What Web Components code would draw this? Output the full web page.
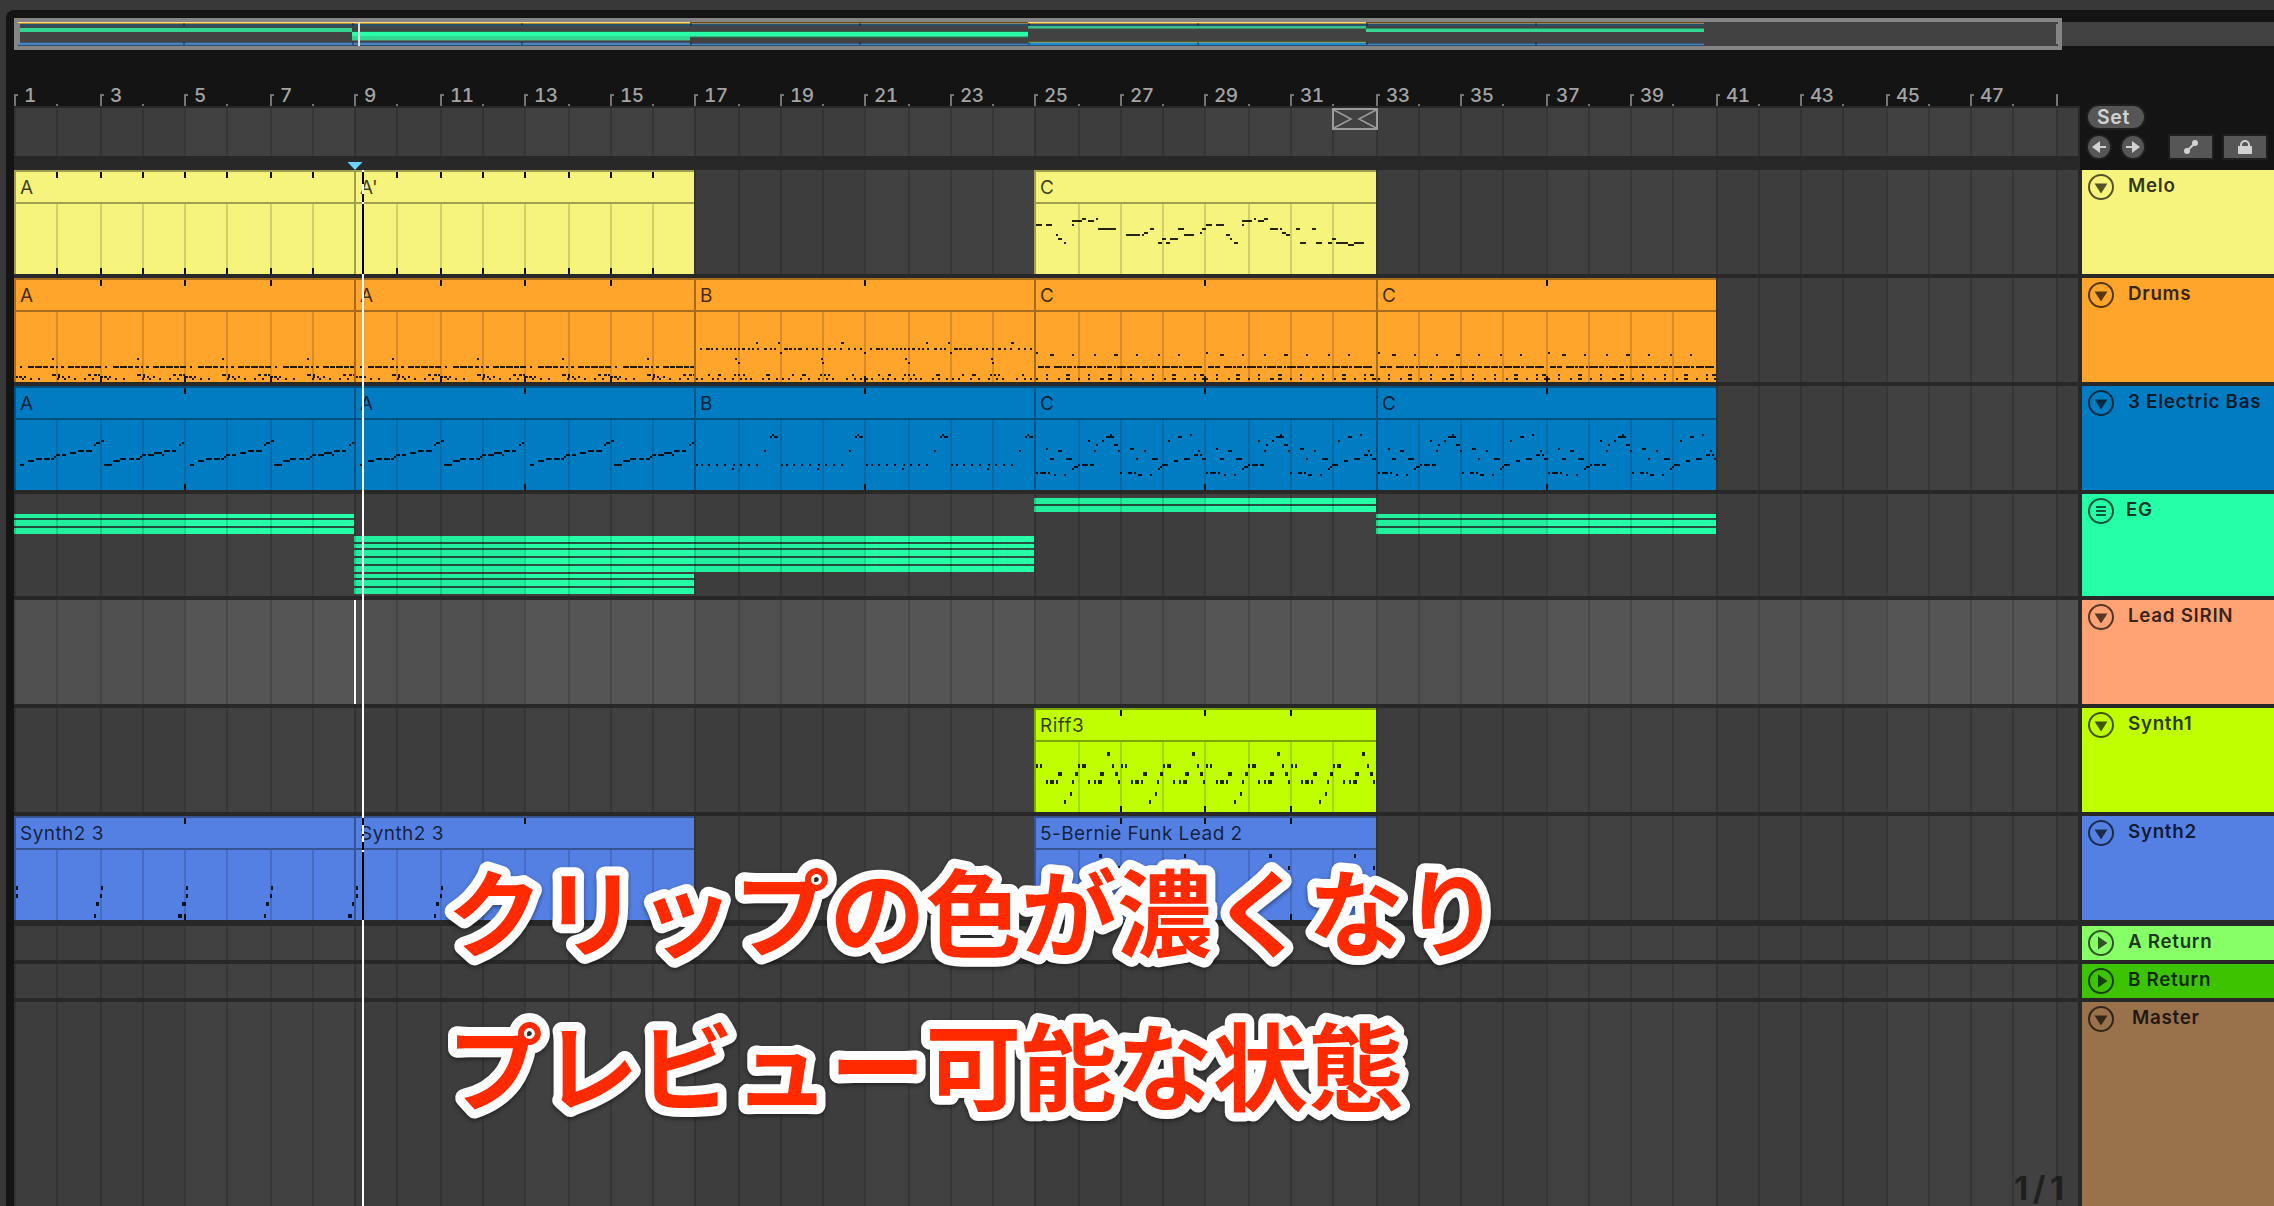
<!DOCTYPE html>
<html lang="ja">
<head>
<meta charset="utf-8">
<title>Arrangement</title>
<style>
    html, body { margin: 0; height: 100%; }
    body {
        background: #383838;
        font-family: Inter, "Noto Sans", sans-serif;
        overflow: hidden;
    }
</style>
</head>
<body>
<arrange-view></arrange-view>

<script>
// x of a bar line, measured from the left edge of the lanes, snapped to 2px
function barX(bar) {
    return 2 * Math.floor((15.22 + 42.525 * (bar - 1)) / 2) - 14;
}

const LANE_WIDTH = 2064;
const BARS = 49;

// columns for a lane: one per bar and the rest at the end
const laneColumns = Array.from({ length: BARS - 1 }, (_, i) => (barX(i + 2) - barX(i + 1)) + 'px').join(' ') + ' 1fr';

// Note patterns: "row:start-end,start-end" in 2px units, times/step is how often and how far it repeats
const NOTES = {
    melo: { h: 1, times: 1, step: 0, rows: '7:24-26,31-32,110-111,115-117;8:19-24,27-30,104-109,112-115;10:1-4,6-9,19-20,86-89,91-95,104-105;12:32-41,58-60,72-75,84-86,118-122,123-124,131-133,139-141;14:55-57,83-84,124-126;15:11-12,46-53,54-55,75-80,96-98,126-128;17:12-14,64-66,68-72,98-99,149-151;19:15-16,62-64,66-68,100-102,133-136,141-144,147-149,151-157,160-165;20:157-160' },
    drumsA: { h: 1, times: 4, step: 42.5, rows: '23:19-20;27:3-4,7-10,10.5-14,14.5-17,18-20,21-22,23.5-25,27-30,30.5-33,33.5-37,37.5-40,40.5-43.5;31:19-21,22-23,37-38.5,40-41.5,42-43;32:1-2,2.5-4,5-6,22-23,24-25,27-28;33:4-5,8-9,12-13,21.5-22.5,25-26,30-31,35-36,39-40' },
    drumsB: { h: 1, times: 2, step: 85, rows: '15:31-32,42-43,73.5-75;18:3-4,6-8,8.5-9.5,11-12,14-15,16-17,18-19,20-21,22-23,24-25.5,27-28,29-30,31.5-32.5,35-36.5,38-39,40-41,45-47,47.5-49,50-51,52-54,56-57,59-60,61-62,64-65,67-68.5,70-71,73-74,77-78,80-81,83-84;20:43-44,85-86;23:20.5-21.5,63.5-64.5;25:22-23,64-65;31:7-8,12-13.5,20-21,22-23,24.5-25.5,36-38,49-50,54-56,63-64,65-66,67-68,79-80;33:1-2,3.5-4.5,9-10,11.5-12.5,15-16,19-20,23-24,25.5-26.5,28-29,34-35,37-38,41-42,44-45,47-48,53-54,57-58,62-63,66-67,69-70,76-77,80-81,83-84' },
    drumsC: { h: 1, times: 2, step: 85, rows: '20:1-2;21:8-10,19-20,30-31,40-42,51-52,62-63,72-73;27:2-5,5.5-8,10-14,14.5-16,16.5-19,20-21,21.5-26,26.5-29,30-31,31.5-36,36.5-39,40-41,41.5-46,46.5-50,50.5-53,54-57,57.5-61,61.5-63,64-68,68.5-72,72.5-74,75-79,79.5-84;31:6-7,16-18,27-28,37-39,48-49,59-60,69-71,80-81,83-85;33:1-2,6-7,12-13,16-18,22-23,27-28,33-35,37-39,43-44,48-49,54-55,59-60,65-66,69-71,75-76,80-81,84-86' },
    bassA: { h: 1, times: 2, step: 85, rows: '10:43.5-45;11:41-43,84-85;12:40-41,82.5-83.5;15:32-35,36-39,75-78,79-81;16:28-31,70-74;17:21-23,24-26,64-66,67-70,74-75;18:20-21,63-64;19:11-14,15-18,18.5-20,53-56,57.5-60,61-63;20:7-10,49.5-53;22:3-5,45-49' },
    bassB: { h: 1, times: 4, step: 42.5, rows: '7:39-40;8:38-39,40-42;15:35-36;22:1-2,3.5-4.5,7-8,11-12,15-16,19.5-20.5,23-24,27-28,31-32;24:19-20' },
    bassC: { h: 1, times: 2, step: 85, rows: '7:38-39,78-79;8:36-40,72-74;10:27-28,34-35,67-68;12:31-32,40-42;14:6-7,48-50;15:12-14,30-31,42-43,55-56,82-83;17:80-82,83-84;19:8-10,16-19,51-52,59-62,75-78,84-86;20:70-72;22:22-23,24-27,28-30,64-67;23:20-22,63-64;24:19-20,62-63;26:1-2,3-6,7-8,43-44,47-49,50-51;27:10-11,15-16,52-54,58-59' },
    riff: { h: 2, times: 4, step: 42.5, rows: '5:36.5-38;11:1-2,3-4,22-23,24-26,39-40;15:12-14,20.5-22,33-35,40.5-42;19:6-7,8-10,11-12,19-20,27-28,30-31,32-34,42-43;25:18-19;29:15-16' },
    synth: { h: 2, times: 2, step: 85, rows: '18:1-2,43.5-44.5;22:1-2,43-44;26:41-42.5,84-86;32:40-41,82-84' },
    lead: { h: 2, times: 2, step: 85, rows: '2:32.5-34,75-76;8:42-43,84.5-85.5' }
};

const TRACKS = [
    { name: 'Melo', color: '#f6f47c', height: 104, clips: [
        { label: 'A', from: 1, to: 9, ticks: 1 },
        { label: "A'", from: 9, to: 17, ticks: 1 },
        { label: 'C', from: 25, to: 33, notes: 'melo' }
    ] },
    { name: 'Drums', color: '#ffa52c', height: 104, clips: [
        { label: 'A', from: 1, to: 9, ticks: 2, notes: 'drumsA' },
        { label: 'A', from: 9, to: 17, ticks: 2, notes: 'drumsA' },
        { label: 'B', from: 17, to: 25, ticks: 4, notes: 'drumsB' },
        { label: 'C', from: 25, to: 33, ticks: 4, notes: 'drumsC' },
        { label: 'C', from: 33, to: 41, ticks: 4, notes: 'drumsC' }
    ] },
    { name: '3 Electric Bas', color: '#007dc2', height: 104, clips: [
        { label: 'A', from: 1, to: 9, ticks: 4, notes: 'bassA' },
        { label: 'A', from: 9, to: 17, ticks: 4, notes: 'bassA' },
        { label: 'B', from: 17, to: 25, ticks: 4, notes: 'bassB' },
        { label: 'C', from: 25, to: 33, ticks: 4, notes: 'bassC' },
        { label: 'C', from: 33, to: 41, ticks: 4, notes: 'bassC' }
    ] },
    { name: 'EG', color: '#25ffa8', height: 102, icon: 'group', indent: 12, bands: [
        { from: 1, to: 9, rows: [[20, 4], [26, 6], [34, 6]] },
        { from: 9, to: 25, rows: [[42, 6], [50, 4], [56, 6], [64, 6], [72, 6]] },
        { from: 9, to: 17, rows: [[80, 4], [86, 6], [94, 6]] },
        { from: 25, to: 33, rows: [[4, 6], [12, 6]] },
        { from: 33, to: 41, rows: [[20, 4], [26, 6], [34, 6]] }
    ] },
    { name: 'Lead SIRIN', color: '#ffa274', height: 104, selected: true },
    { name: 'Synth1', color: '#bfff00', height: 104, clips: [
        { label: 'Riff3', from: 25, to: 33, ticks: 2, notes: 'riff' }
    ] },
    { name: 'Synth2', color: '#5480e4', height: 104, gap: 6, clips: [
        { label: 'Synth2 3', from: 1, to: 9, ticks: 4, notes: 'synth' },
        { label: 'Synth2 3', from: 9, to: 17, ticks: 4, notes: 'synth' },
        { label: '5-Bernie Funk Lead 2', from: 25, to: 33, ticks: 2, notes: 'lead' }
    ] },
    { name: 'A Return', color: '#87ff67', height: 34, icon: 'closed' },
    { name: 'B Return', color: '#3dc300', height: 34, icon: 'closed' },
    { name: 'Master', color: '#99724b', height: 204, indent: 18 }
];

const rect = (x, y, w, h, fill) => `<rect x="${x}" y="${y}" width="${w}" height="${h}" fill="${fill}"/>`;

// Bar lines and the four bar shading, laid over a lane
class BarGrid extends HTMLElement {
    connectedCallback() {
        let shapes = '';
        for (let bar = 1; bar <= BARS; bar += 8) {
            const end = bar === BARS ? LANE_WIDTH : barX(bar + 4);
            shapes += rect(barX(bar), 0, end - barX(bar), '100%', 'rgba(0,0,0,.06)');
        }
        for (let bar = 1; bar <= BARS; bar++) {
            shapes += rect(barX(bar), 0, 2, '100%', 'rgba(0,0,0,.15)');
        }
        this.attachShadow({ mode: 'open' }).innerHTML = `
            <style>
                :host { display: block; height: 100%; }
                svg { display: block; width: 100%; height: 100%; }
            </style>
            <svg shape-rendering="crispEdges">${shapes}</svg>
        `;
    }
}
customElements.define('bar-grid', BarGrid);

class MidiClip extends HTMLElement {
    connectedCallback() {
        const { from, to, ticks, notes, color } = this.clip;
        const left = barX(from);
        const width = barX(to) - left;
        let lines = '';
        let marks = '';
        for (let bar = from + 1; bar < to; bar++) {
            const x = barX(bar) - left;
            lines += rect(x, 34, 2, 70, 'rgba(0,0,0,.15)');
            if (ticks && (bar - from) % ticks === 0) {
                marks += rect(x, 2, 2, 6, '#111') + rect(x, 98, 2, 6, '#111');
            }
        }
        this.attachShadow({ mode: 'open' }).innerHTML = `
            <style>
                :host {
                    display: grid;
                    height: 104px;
                    background: ${color};
                    overflow: hidden;
                }
                svg, .label { grid-area: 1 / 1; }
                svg { display: block; }
                .label {
                    height: 32px;
                    padding: 0 6px;
                    font-size: 19px;
                    line-height: 35px;
                    letter-spacing: .45px;
                    color: rgba(0, 0, 0, .75);
                    white-space: nowrap;
                }
            </style>
            <svg width="${width}" height="104" shape-rendering="crispEdges">
                ${rect(0, 0, width, 2, 'rgba(0,0,0,.35)')}
                ${rect(0, 2, 2, 102, 'rgba(0,0,0,.35)')}
                ${rect(2, 32, width - 2, 2, 'rgba(0,0,0,.35)')}
                ${lines}${marks}${notes ? this.drawNotes(NOTES[notes], width) : ''}
            </svg>
            <div class="label"><slot></slot></div>
        `;
    }

    drawNotes({ h, times, step, rows }, width) {
        let out = '';
        for (let i = 0; i < times; i++) {
            rows.split(';').forEach(row => {
                const [y, spans] = row.split(':');
                spans.split(',').forEach(span => {
                    const [a, b] = span.split('-').map(Number);
                    const x = Math.round((a + i * step) * 2);
                    out += rect(x, 34 + y * 2, Math.min((b - a) * 2, width - x), h * 2, 'rgba(0,0,0,.85)');
                });
            });
        }
        return out;
    }
}
customElements.define('midi-clip', MidiClip);

class TrackHeader extends HTMLElement {
    connectedCallback() {
        const icons = {
            open: '<path d="M6.5 9.5h13l-6.5 10z" fill="#000"/>',
            closed: '<path d="M10 6.5v13l9.500-6.500z" fill="#000"/>',
            group: '<path d="M8 9h10M8 13h10M8 17h10" stroke="#000" stroke-width="2"/>'
        };
        this.attachShadow({ mode: 'open' }).innerHTML = `
            <style>
                :host {
                    display: flex;
                    box-sizing: border-box;
                    width: 192px;
                    height: 100%;
                    padding: 4px 0 0 6px;
                    overflow: hidden;
                    background: ${this.getAttribute('color')};
                }
                svg { flex: none; opacity: .66; }
                .name {
                    margin-left: ${this.getAttribute('indent') || 14}px;
                    font-size: 18.8px;
                    font-weight: 600;
                    line-height: 23px;
                    letter-spacing: .7px;
                    color: rgba(0, 0, 0, .8);
                    white-space: nowrap;
                }
            </style>
            <svg width="26" height="26"><circle cx="13" cy="13" r="12" fill="none" stroke="#000" stroke-width="2"/>${icons[this.getAttribute('icon') || 'open']}</svg>
            <div class="name"><slot></slot></div>
        `;
    }
}
customElements.define('track-header', TrackHeader);

class TrackRow extends HTMLElement {
    connectedCallback() {
        const { name, color, height, gap, icon, indent, selected, clips = [], bands = [] } = this.track;
        const shapes = bands.map(({ from, to, rows }) => {
            const x = barX(from);
            const w = barX(to) - x;
            const top = rows[0][0];
            const last = rows[rows.length - 1];
            return rect(x, top, w, last[0] + last[1] - top, '#285040')
                + rows.map(([y, h]) => rect(x, y, w, h, color)).join('');
        }).join('');
        this.attachShadow({ mode: 'open' }).innerHTML = `
            <style>
                :host {
                    display: flex;
                    gap: 4px;
                    height: ${height}px;
                    margin-bottom: ${gap || 4}px;
                }
                .lane {
                    display: grid;
                    grid-template-columns: ${laneColumns};
                    grid-template-rows: ${height}px;
                    width: ${LANE_WIDTH}px;
                    background: ${selected ? '#555' : '#414141'};
                }
                .bands, bar-grid { grid-area: 1 / 1 / 2 / -1; }
                .bands { display: block; }
                .insert { grid-area: 1 / 9; width: 2px; background: #fff; }
            </style>
            <div class="lane">
                ${shapes ? `<svg class="bands" width="${LANE_WIDTH}" height="${height}" shape-rendering="crispEdges">${shapes}</svg>` : ''}
                <bar-grid></bar-grid>
                ${selected ? '<div class="insert"></div>' : ''}
            </div>
            <track-header color="${color}" icon="${icon || ''}" indent="${indent || ''}">${name}</track-header>
        `;
        const lane = this.shadowRoot.querySelector('.lane');
        clips.forEach(clip => {
            const el = document.createElement('midi-clip');
            el.clip = { ...clip, color };
            el.textContent = clip.label;
            el.style.gridArea = `1 / ${clip.from} / 2 / ${clip.to}`;
            lane.append(el);
        });
    }
}
customElements.define('track-row', TrackRow);

class SongOverview extends HTMLElement {
    connectedCallback() {
        // [from, to, [y, height, colour]...], y from the top of the strip
        const parts = [
            [4, 338, [[0, 1, '#ffe17c'], [1, 1, '#b39034'], [2, 2, '#285069'], [4, 2, '#3c4a4c'], [6, 4, '#32d592'], [20, 1, '#355680'], [21, 2, '#4a84bd'], [23, 1, '#254f6e']]],
            [338, 676, [[0, 1, '#ffe17c'], [1, 1, '#b39034'], [2, 2, '#285069'], [4, 2, '#3c4a4c'], [9, 1, '#226b4b'], [10, 4, '#28ffa8'], [14, 4, '#32d592'], [18, 1, '#48806a'], [20, 1, '#355680'], [21, 2, '#4a84bd'], [23, 1, '#254f6e']]],
            [676, 1014, [[0, 1, '#764609'], [1, 1, '#88857c'], [2, 2, '#285069'], [9, 1, '#226b4b'], [10, 4, '#28ffa8'], [14, 1, '#42a881'], [15, 1, '#226b4b'], [21, 1, '#355680'], [22, 1, '#4a84bd'], [23, 1, '#254f6e']]],
            [1014, 1352, [[0, 1, '#ffe17c'], [1, 1, '#b39034'], [2, 2, '#285069'], [4, 2, '#3bbd8a'], [6, 1, '#368f69'], [19, 1, '#525b24'], [20, 1, '#7e9c83'], [21, 2, '#198bce'], [23, 1, '#254f6e']]],
            [1352, 1690, [[0, 1, '#764609'], [1, 1, '#88857c'], [2, 2, '#285069'], [6, 1, '#2c8b64'], [7, 3, '#32d592'], [21, 1, '#355680'], [22, 1, '#4a84bd'], [23, 1, '#254f6e']]]
        ];
        let shapes = parts.map(([a, b, rows]) => rows.map(([y, h, fill]) => rect(a, 4 + y, b - a, h, fill)).join('')).join('');
        // clip edges
        for (let i = 1; i < 10; i++) {
            shapes += rect(i * 169, 5, 2, 3, 'rgba(0,0,0,.3)') + rect(i * 169, 24, 2, 3, 'rgba(0,0,0,.3)');
        }
        this.attachShadow({ mode: 'open' }).innerHTML = `
            <style>
                :host { display: block; height: 32px; }
                svg { display: block; }
            </style>
            <svg width="2260" height="32" shape-rendering="crispEdges">
                ${rect(0, 4, 2260, 24, '#424242')}
                ${shapes}
                ${rect(344, 4, 2, 24, '#e0e0e0')}
                <path d="M0 0h2048v32H0zM4 4v24h2040V4z" fill="#858585" fill-rule="evenodd"/>
                ${rect(4, 6, 2, 20, '#858585')}
                ${rect(2042, 6, 2, 20, '#858585')}
            </svg>
        `;
    }
}
customElements.define('song-overview', SongOverview);

class BeatRuler extends HTMLElement {
    connectedCallback() {
        let cells = '';
        for (let bar = 1; bar < BARS; bar += 2) {
            cells += `<div style="width:${barX(bar + 2) - barX(bar)}px">${bar}</div>`;
        }
        let ticks = '';
        for (let bar = 1; bar <= BARS; bar++) {
            const x = barX(bar);
            ticks += bar % 2 ? rect(x, 0, 2, 12, '#747474') : rect(x, 10, 2, 2, '#747474');
            if (bar % 2 && bar < BARS) ticks += rect(x + 2, 0, 1.5, 2, '#747474');
        }
        this.attachShadow({ mode: 'open' }).innerHTML = `
            <style>
                :host { display: grid; height: 56px; align-items: end; }
                .numbers, svg { grid-area: 1 / 1; }
                .numbers {
                    display: flex;
                    height: 24px;
                    line-height: 27px;
                    font-size: 19px;
                    font-weight: 500;
                    font-variant-numeric: tabular-nums;
                    letter-spacing: -.5px;
                    color: #a4a4a4;
                }
                .numbers div { box-sizing: border-box; padding-left: 10px; }
                svg { display: block; }
            </style>
            <div class="numbers">${cells}</div>
            <svg width="${LANE_WIDTH}" height="12" shape-rendering="crispEdges">${ticks}</svg>
        `;
    }
}
customElements.define('beat-ruler', BeatRuler);

class LocatorControls extends HTMLElement {
    connectedCallback() {
        this.attachShadow({ mode: 'open' }).innerHTML = `
            <style>
                :host {
                    display: flex;
                    flex-direction: column;
                    gap: 8px;
                    box-sizing: border-box;
                    width: 194px;
                    height: 64px;
                    padding-left: 8px;
                    background: #141414;
                }
                .set {
                    box-sizing: border-box;
                    width: 56px;
                    height: 22px;
                    padding-left: 9px;
                    border-radius: 11px;
                    background: #565656;
                    box-shadow: 0 0 0 2px #1e1e1e;
                    color: #d2d2d2;
                    font-size: 19.5px;
                    font-weight: 600;
                    line-height: 23px;
                    letter-spacing: .6px;
                }
                .buttons { display: flex; }
                .buttons svg {
                    display: block;
                    background: #565656;
                    box-shadow: 0 0 0 2px #1e1e1e;
                }
                .round { border-radius: 50%; margin-right: 12px; }
                .wide { margin-left: 14px; margin-right: -2px; }
            </style>
            <div class="set">Set</div>
            <div class="buttons">
                <svg class="round" width="22" height="22"><path d="M4 11l8-6v5h6v2h-6v5z" fill="#d2d2d2"/></svg>
                <svg class="round" width="22" height="22"><path d="M18 11l-8-6v5H4v2h6v5z" fill="#d2d2d2"/></svg>
                <svg class="wide" width="42" height="22"><g fill="#d2d2d2"><path d="M17 15l8-8" stroke="#d2d2d2" stroke-width="2"/><circle cx="17" cy="15" r="3"/><circle cx="25" cy="7" r="3"/></g></svg>
                <svg class="wide" width="42" height="22"><path d="M14 10h14v8H14z" fill="#d2d2d2"/><path d="M17 11V9a4 4 0 0 1 8 0v2" fill="none" stroke="#d2d2d2" stroke-width="2"/></svg>
            </div>
        `;
    }
}
customElements.define('locator-controls', LocatorControls);

class ScrubArea extends HTMLElement {
    connectedCallback() {
        this.attachShadow({ mode: 'open' }).innerHTML = `
            <style>
                :host {
                    display: block;
                    position: relative;
                    box-sizing: border-box;
                    width: 2066px;
                    height: 64px;
                    padding: 2px 2px 14px 0;
                    background: #282828;
                }
                .area { height: 48px; background: #414141; }
                svg { position: absolute; display: block; }
                .loop { left: ${barX(32)}px; top: 2px; }
                .start { left: 333px; top: 56px; }
            </style>
            <div class="area"><bar-grid></bar-grid></div>
            <svg class="loop" width="46" height="22" fill="none" stroke="#9c9c9c" stroke-width="2"><path d="M1 1h44v20H1z"/><path d="M2 2l17 9-17 9M44 2l-17 9 17 9" stroke-width="1.500"/></svg>
            <svg class="start" width="16" height="8"><path d="M.5 0h15L8 8z" fill="#6cd4ff"/></svg>
        `;
    }
}
customElements.define('scrub-area', ScrubArea);

// Playback line. It is inverted where it crosses the light clips.
class PlayHead extends HTMLElement {
    connectedCallback() {
        const dark = [[2, 12], [24, 8], [34, 70], [648, 7], [664, 2], [672, 8], [682, 68]];
        this.attachShadow({ mode: 'open' }).innerHTML = `
            <style>
                :host { display: block; position: absolute; left: 362px; top: 170px; }
                svg { display: block; }
            </style>
            <svg width="2" height="1036" shape-rendering="crispEdges">
                ${rect(0, 0, 2, 1036, '#fff')}
                ${dark.map(([y, h]) => rect(0, y, 2, h, '#000')).join('')}
            </svg>
        `;
    }
}
customElements.define('play-head', PlayHead);

class CaptionText extends HTMLElement {
    connectedCallback() {
        const lines = this.getAttribute('lines').split('|');
        this.attachShadow({ mode: 'open' }).innerHTML = `
            <style>
                :host {
                    display: block;
                    position: absolute;
                    left: 427px;
                    top: 840px;
                    filter: drop-shadow(0 2px 2px rgba(0, 0, 0, .45));
                }
                svg { display: block; }
                text {
                    font: 700 95.700px "Noto Sans CJK JP", sans-serif;
                    fill: #ff2a00;
                    stroke: #fff;
                    stroke-width: 18px;
                    stroke-linejoin: round;
                    paint-order: stroke;
                }
            </style>
            <svg width="1100" height="300">
                ${lines.map((line, i) => `<text x="20" y="${110 + i * 154}">${line}</text>`).join('')}
            </svg>
        `;
    }
}
customElements.define('caption-text', CaptionText);

class ArrangeView extends HTMLElement {
    connectedCallback() {
        this.attachShadow({ mode: 'open' }).innerHTML = `
            <style>
                :host {
                    display: block;
                    position: relative;
                    box-sizing: border-box;
                    width: 2274px;
                    height: 1206px;
                    padding: 10px 0 0 6px;
                    overflow: hidden;
                }
                .panel {
                    box-sizing: border-box;
                    height: 1196px;
                    padding: 8px 0 0 8px;
                    border-top-left-radius: 8px;
                    background: #141414;
                }
                .top { display: flex; }
                .tracks { background: #282828; }
                .zoom {
                    position: absolute;
                    left: 2014px;
                    top: 1171px;
                    font-size: 33px;
                    line-height: 34px;
                    font-weight: 700;
                    letter-spacing: 4.5px;
                    color: rgba(0, 0, 0, .5);
                }
            </style>
            <div class="panel">
                <song-overview></song-overview>
                <beat-ruler></beat-ruler>
                <div class="top">
                    <scrub-area></scrub-area>
                    <locator-controls></locator-controls>
                </div>
                <div class="tracks"></div>
            </div>
            <play-head></play-head>
            <div class="zoom">1/1</div>
            <caption-text lines="クリップの色が濃くなり|プレビュー可能な状態"></caption-text>
        `;
        const tracks = this.shadowRoot.querySelector('.tracks');
        TRACKS.forEach(track => {
            const row = document.createElement('track-row');
            row.track = track;
            tracks.append(row);
        });
    }
}
customElements.define('arrange-view', ArrangeView);
</script>
</body>
</html>
